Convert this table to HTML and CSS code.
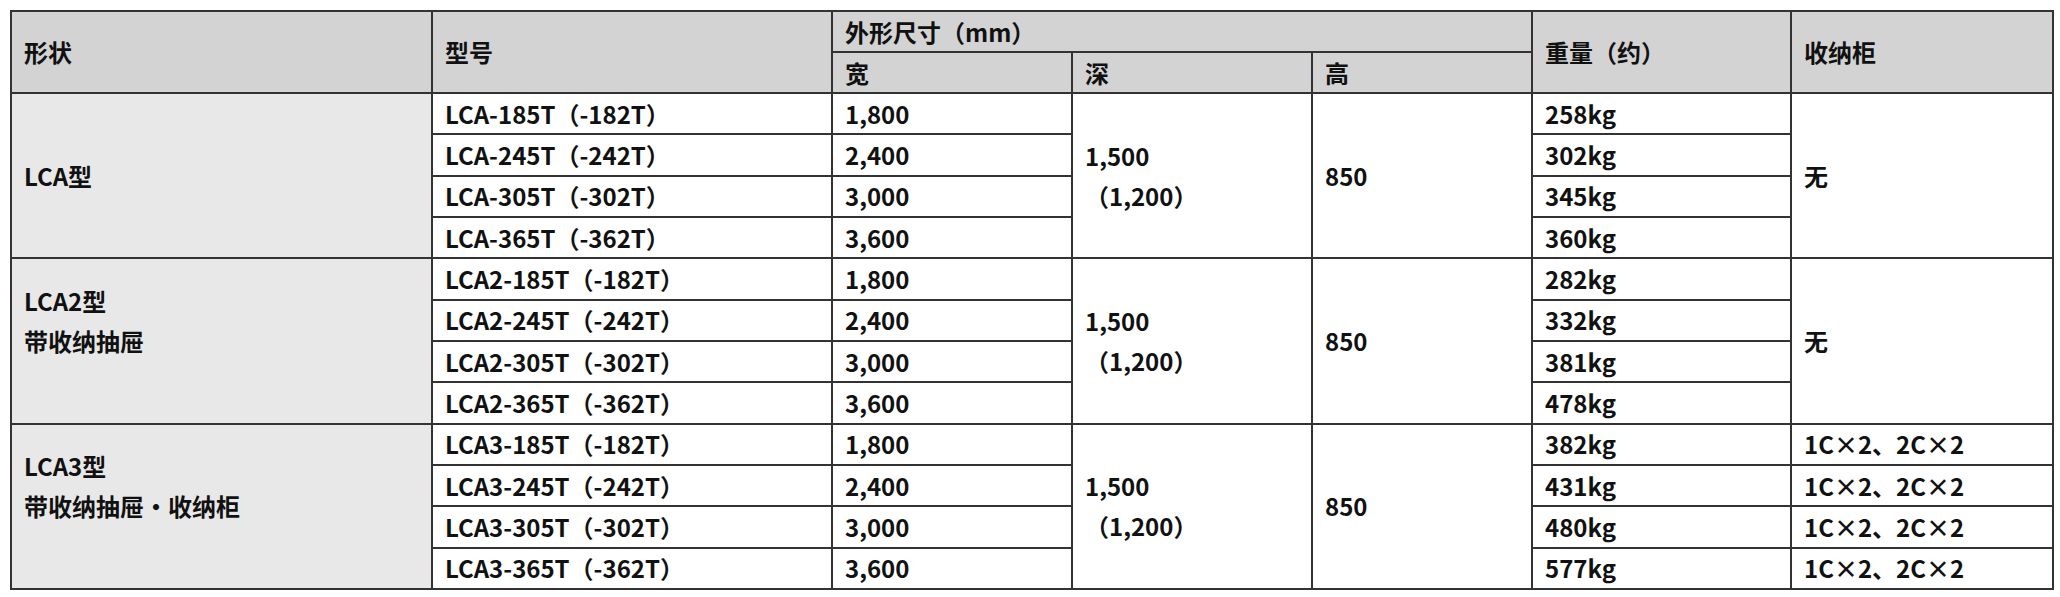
FILE: index.html
```html
<!DOCTYPE html>
<html lang="zh-CN">
<head>
<meta charset="utf-8">
<title>LCA</title>
<link rel="stylesheet" href="styles.css">
</head>
<body>
<div class="wrap">
<table class="spec">
  <colgroup>
    <col class="c1"><col class="c2"><col class="c3"><col class="c4"><col class="c5"><col class="c6"><col class="c7">
  </colgroup>
  <thead>
    <tr class="hr">
      <th rowspan="2">形状</th>
      <th rowspan="2">型号</th>
      <th colspan="3">外形尺寸（mm）</th>
      <th rowspan="2">重量（约）</th>
      <th rowspan="2">收纳柜</th>
    </tr>
    <tr class="hr">
      <th>宽</th><th>深</th><th>高</th>
    </tr>
  </thead>
  <tbody>
    <tr><td class="shape" rowspan="4">LCA型</td><td>LCA-185T（-182T）</td><td>1,800</td><td class="ml" rowspan="4">1,500<br>（1,200）</td><td rowspan="4">850</td><td>258kg</td><td rowspan="4">无</td></tr>
    <tr><td>LCA-245T（-242T）</td><td>2,400</td><td>302kg</td></tr>
    <tr><td>LCA-305T（-302T）</td><td>3,000</td><td>345kg</td></tr>
    <tr><td>LCA-365T（-362T）</td><td>3,600</td><td>360kg</td></tr>
    <tr><td class="shape ml two" rowspan="4">LCA2型<br>带收纳抽屉</td><td>LCA2-185T（-182T）</td><td>1,800</td><td class="ml" rowspan="4">1,500<br>（1,200）</td><td rowspan="4">850</td><td>282kg</td><td rowspan="4">无</td></tr>
    <tr><td>LCA2-245T（-242T）</td><td>2,400</td><td>332kg</td></tr>
    <tr><td>LCA2-305T（-302T）</td><td>3,000</td><td>381kg</td></tr>
    <tr><td>LCA2-365T（-362T）</td><td>3,600</td><td>478kg</td></tr>
    <tr><td class="shape ml two" rowspan="4">LCA3型<br>带收纳抽屉・收纳柜</td><td>LCA3-185T（-182T）</td><td>1,800</td><td class="ml" rowspan="4">1,500<br>（1,200）</td><td rowspan="4">850</td><td>382kg</td><td>1C×2、2C×2</td></tr>
    <tr><td>LCA3-245T（-242T）</td><td>2,400</td><td>431kg</td><td>1C×2、2C×2</td></tr>
    <tr><td>LCA3-305T（-302T）</td><td>3,000</td><td>480kg</td><td>1C×2、2C×2</td></tr>
    <tr><td>LCA3-365T（-362T）</td><td>3,600</td><td>577kg</td><td>1C×2、2C×2</td></tr>
  </tbody>
</table>
</div>
</body>
</html>
```
FILE: styles.css
```css
html, body {
  margin: 0;
  padding: 0;
  background: #ffffff;
}
.wrap {
  padding: 10px 0 0 10px;
}
.spec {
  border-collapse: collapse;
  table-layout: fixed;
  width: 2042px;
  font-family: "Noto Sans CJK SC", "Noto Sans", sans-serif;
  font-weight: 700;
  font-size: 24px;
  color: #111111;
}
.c1 { width: 421px; }
.c2 { width: 400px; }
.c3 { width: 240px; }
.c4 { width: 240px; }
.c5 { width: 220px; }
.c6 { width: 259px; }
.c7 { width: 262px; }
.spec th, .spec td {
  border: 2px solid #333333;
  padding: 0 12px;
  text-align: left;
  vertical-align: middle;
  line-height: 28px;
  white-space: nowrap;
  font-weight: 700;
}
.spec th {
  background: #d3d3d3;
}
.spec tr.hr {
  height: 41px;
}
.spec tbody tr {
  height: 41.33px;
}
.spec td {
  background: #ffffff;
}
.spec td.shape {
  background: #e8e8e8;
}
.spec td.ml {
  line-height: 40px;
}
.spec td.two {
  padding-bottom: 40px;
}
```
